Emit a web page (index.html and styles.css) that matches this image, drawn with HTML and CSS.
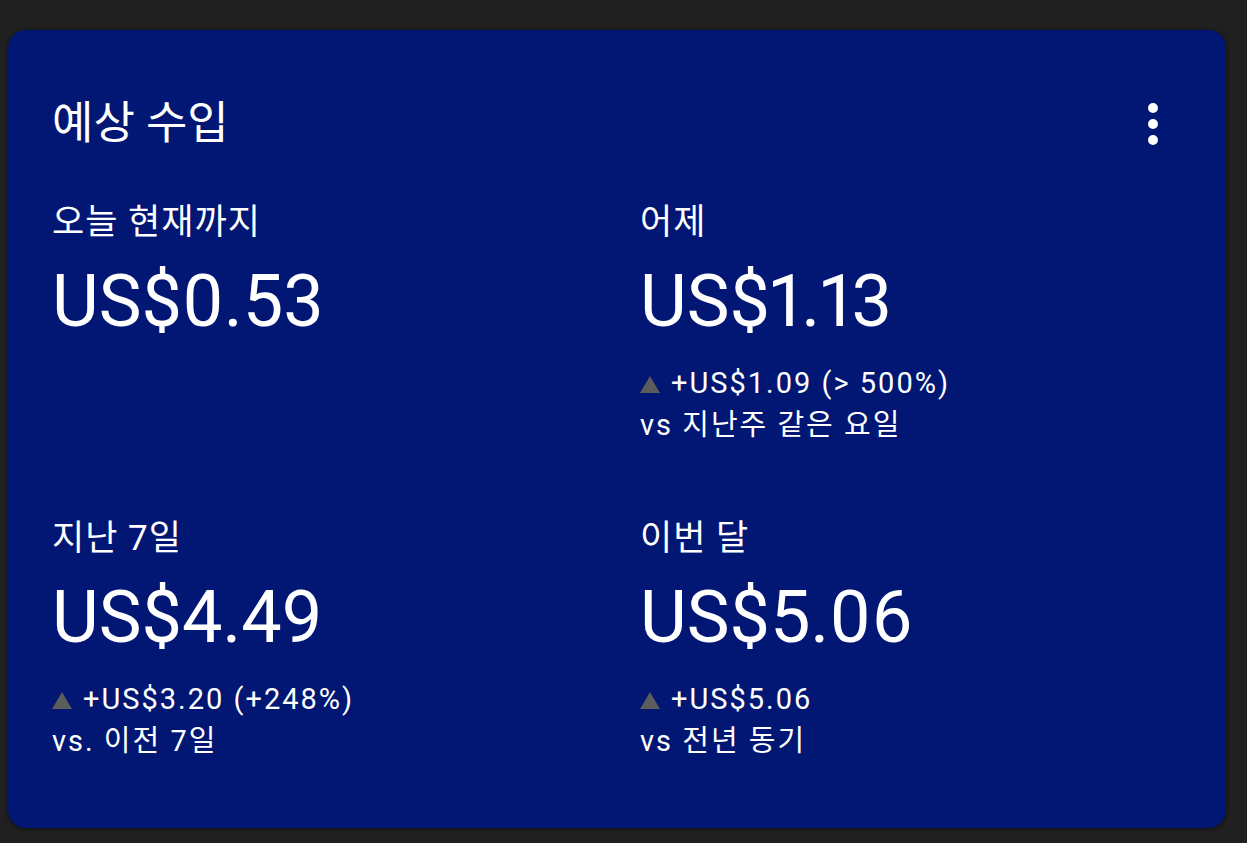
FILE: index.html
```html
<!DOCTYPE html>
<html lang="ko">
<head>
<meta name="viewport" content="width=device-width, initial-scale=1">
<title>예상 수입</title>
<link rel="stylesheet" href="styles.css">
</head>
<body>
<div class="card">
  <div class="card-head">
    <h1>예상 수입</h1>
    <button class="more" type="button" aria-label="더보기">
      <svg viewBox="0 0 48 48" width="48" height="48"><circle cx="24" cy="8" r="5"/><circle cx="24" cy="24" r="5"/><circle cx="24" cy="40" r="5"/></svg>
    </button>
  </div>

  <div class="stats">
    <div class="stat">
      <div class="label">오늘 현재까지</div>
      <div class="amount">US$0.53</div>
    </div>
    <div class="stat">
      <div class="label">어제</div>
      <div class="amount">US$1.13</div>
      <div class="change"><span class="up"></span>+US$1.09 (&gt; 500%)</div>
      <div class="vs">vs 지난주 같은 요일</div>
    </div>
    <div class="stat">
      <div class="label">지난 7일</div>
      <div class="amount">US$4.49</div>
      <div class="change"><span class="up"></span>+US$3.20 (+248%)</div>
      <div class="vs">vs. 이전 7일</div>
    </div>
    <div class="stat">
      <div class="label">이번 달</div>
      <div class="amount">US$5.06</div>
      <div class="change"><span class="up"></span>+US$5.06</div>
      <div class="vs">vs 전년 동기</div>
    </div>
  </div>
</div>
</body>
</html>
```

FILE: styles.css
```css
body {
  margin: 0;
  padding: 30px 21px 15px 8px;
  background-color: #202020;
  color: white;
  font-family: Roboto, "Noto Sans CJK KR", sans-serif;
}
.card {
  background-color: #011773;
  border-radius: 18px;
  padding: 64px 49px 66px 44px;
  box-shadow: 0 1px 4px rgba(0, 0, 0, 0.6);
}
.card-head {
  display: flex;
  align-items: center;
  justify-content: space-between;
  height: 60px;
  margin-bottom: 49px;
}
h1 {
  margin: 0;
  font-size: 45px;
  font-weight: normal;
  line-height: 60px;
}
.more {
  width: 48px;
  height: 48px;
  padding: 0;
  border: none;
  background: none;
  cursor: pointer;
}
.more svg {
  display: block;
  fill: white;
}
.stats {
  display: grid;
  grid-template-columns: 588px 1fr;
  row-gap: 73px;
}
.label {
  font-size: 35px;
  line-height: 40px;
  letter-spacing: 1px;
}
.amount {
  margin-top: 19px;
  font-size: 72px;
  line-height: 80px;
  font-variant-numeric: proportional-nums;
}
.change {
  margin-top: 20px;
}
.change,
.vs {
  font-size: 29px;
  line-height: 42px;
  letter-spacing: 2px;
}
.up {
  display: inline-block;
  width: 0;
  height: 0;
  margin-right: 11px;
  border-left: 10px solid transparent;
  border-right: 10px solid transparent;
  border-bottom: 17px solid #5c5c5c;
}
```
